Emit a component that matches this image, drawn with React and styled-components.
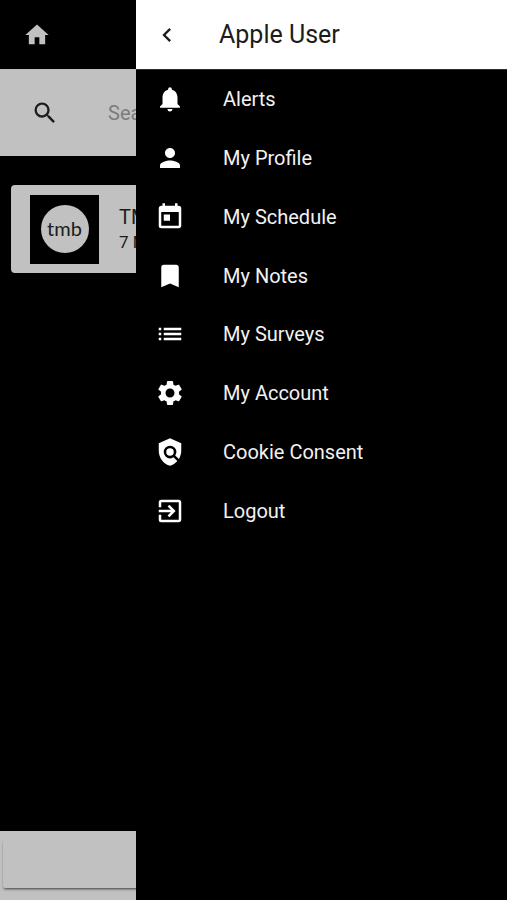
import React from 'react';
import styled, { createGlobalStyle } from 'styled-components';
import {
	MdBookmark,
	MdChevronLeft,
	MdExitToApp,
	MdHome,
	MdList,
	MdNotifications,
	MdPerson,
	MdPolicy,
	MdSearch,
	MdSettings,
	MdToday,
} from 'react-icons/md';

const links = [
	{ label: 'Alerts', icon: MdNotifications },
	{ label: 'My Profile', icon: MdPerson },
	{ label: 'My Schedule', icon: MdToday },
	{ label: 'My Notes', icon: MdBookmark },
	{ label: 'My Surveys', icon: MdList },
	{ label: 'My Account', icon: MdSettings },
	{ label: 'Cookie Consent', icon: MdPolicy },
	{ label: 'Logout', icon: MdExitToApp },
];

const App = () => {
	return (
		<>
			<GlobalStyle />
			<Page>
				<TopBar>
					<IconButton aria-label="Home">
						<MdHome size={28} />
					</IconButton>
				</TopBar>
				<SearchBar>
					<MdSearch size={28} />
					<SearchInput type="search" placeholder="Search" aria-label="Search" />
				</SearchBar>
				<Events>
					<EventCard href="#">
						<Logo>
							<LogoDisc>tmb</LogoDisc>
						</Logo>
						<div>
							<EventName>TMB</EventName>
							<EventDate>7 Meetings</EventDate>
						</div>
					</EventCard>
				</Events>
				<Footer>
					<FooterPanel />
				</Footer>
			</Page>
			<Drawer>
				<DrawerHeader>
					<IconButton aria-label="Close menu">
						<MdChevronLeft size={28} />
					</IconButton>
					<UserName>Apple User</UserName>
				</DrawerHeader>
				<nav>
					<Menu>
						{links.map(({ label, icon: Icon }) => (
							<li key={label}>
								<MenuLink href="#">
									<Icon size={30} />
									<span>{label}</span>
								</MenuLink>
							</li>
						))}
					</Menu>
				</nav>
			</Drawer>
		</>
	);
};

const GlobalStyle = createGlobalStyle`
	*, *::before, *::after {
		box-sizing: border-box;
	}

	body {
		margin: 0;
		background: #000000;
		font-family: Roboto, sans-serif;
	}

	svg {
		flex-shrink: 0;
	}
`;

const Page = styled.div`
	display: flex;
	flex-direction: column;
	min-height: 100vh;
	overflow: hidden;
	color: #1c1c1c;
`;

const TopBar = styled.header`
	display: flex;
	align-items: center;
	height: 69px;
	padding: 0 23px;
	color: #c1c1c1;
`;

const IconButton = styled.button`
	display: flex;
	padding: 0;
	border: 0;
	background: none;
	color: inherit;
	cursor: pointer;
`;

const SearchBar = styled.div`
	display: flex;
	align-items: center;
	gap: 49px;
	height: 87px;
	padding: 0 31px;
	background: #c1c1c1;
`;

const SearchInput = styled.input`
	flex: 1;
	min-width: 0;
	padding: 0;
	border: 0;
	outline: 0;
	background: none;
	color: inherit;
	font: 20px/24px Roboto, sans-serif;

	&::placeholder {
		color: #7c7c7c;
	}
`;

const Events = styled.main`
	flex: 1;
	padding: 29px 11px;
`;

const EventCard = styled.a`
	display: flex;
	align-items: center;
	gap: 20px;
	height: 88px;
	padding: 0 19px;
	border-radius: 4px;
	background: #c1c1c1;
	color: inherit;
	text-decoration: none;
`;

const Logo = styled.div`
	display: flex;
	align-items: center;
	justify-content: center;
	width: 69px;
	height: 69px;
	background: #000000;
`;

const LogoDisc = styled.span`
	width: 48px;
	height: 48px;
	border-radius: 50%;
	background: #c1c1c1;
	font: 400 20px/46px Lato, sans-serif;
	text-align: center;
`;

const EventName = styled.div`
	font-size: 20px;
	line-height: 26px;
`;

const EventDate = styled.div`
	font-size: 17px;
	line-height: 24px;
`;

const Footer = styled.footer`
	height: 69px;
	padding: 8px 3px 12px;
	background: #c1c1c1;
`;

const FooterPanel = styled.div`
	height: 100%;
	border-radius: 2px;
	background: #c1c1c1;
	box-shadow: 0 2px 3px -1px rgba(0, 0, 0, 0.7);
`;

const Drawer = styled.aside`
	position: fixed;
	top: 0;
	right: 0;
	bottom: 0;
	left: 136px;
	overflow-y: auto;
	background: #000000;
	color: #f2f2f2;
`;

const DrawerHeader = styled.div`
	display: flex;
	align-items: center;
	gap: 38px;
	height: 70px;
	padding: 0 17px;
	border-bottom: 1px solid #2b2b2b;
	background: #ffffff;
	color: #1c1c1c;
`;

const UserName = styled.h1`
	margin: 0;
	font-size: 25px;
	font-weight: 400;
	line-height: 33px;
`;

const Menu = styled.ul`
	display: grid;
	grid-auto-rows: 1fr;
	height: 470px;
	margin: 0;
	padding: 0;
	list-style: none;
`;

const MenuLink = styled.a`
	display: flex;
	align-items: center;
	gap: 38px;
	height: 100%;
	padding: 0 19px;
	color: inherit;
	font-size: 20px;
	line-height: 24px;
	text-decoration: none;

	svg {
		color: #ffffff;
	}
`;

export default App;
